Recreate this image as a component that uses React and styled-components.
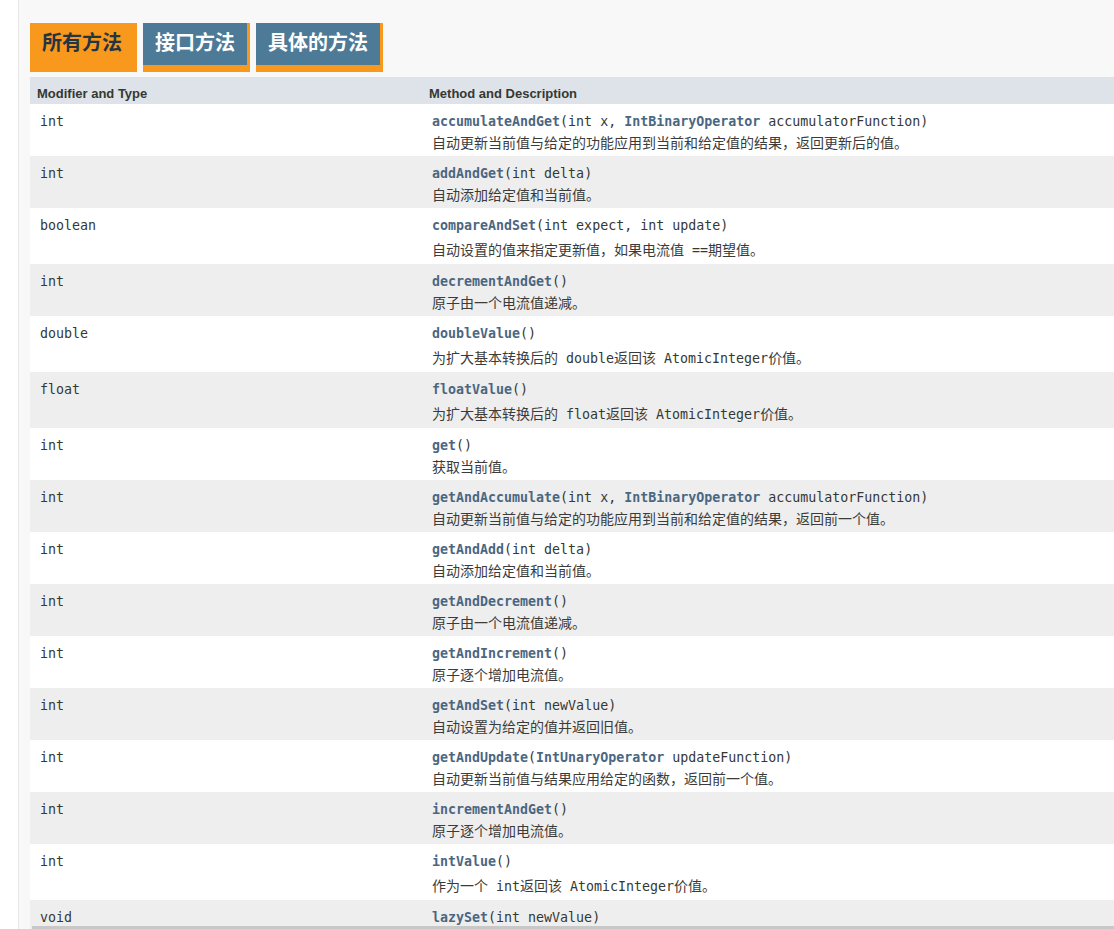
import React from 'react';
import styled, { createGlobalStyle } from 'styled-components';

const GlobalStyle = createGlobalStyle`
  html, body {
    margin: 0;
    padding: 0;
    background: #ffffff;
    overflow: hidden;
  }
`;

const MONO = '"DejaVu Sans Mono", "Liberation Mono", monospace';
const CJK = '"Noto Sans CJK SC", "Noto Sans", sans-serif';

const METHODS = [
  {
    type: 'int',
    name: 'accumulateAndGet',
    params: [['int x, '], ['IntBinaryOperator', true], [' accumulatorFunction']],
    desc: ['自动更新当前值与给定的功能应用到当前和给定值的结果，返回更新后的值。'],
  },
  { type: 'int', name: 'addAndGet', params: [['int delta']], desc: ['自动添加给定值和当前值。'] },
  {
    type: 'boolean',
    name: 'compareAndSet',
    params: [['int expect, int update']],
    desc: ['自动设置的值来指定更新值，如果电流值', { code: ' ==' }, '期望值。'],
  },
  { type: 'int', name: 'decrementAndGet', params: [], desc: ['原子由一个电流值递减。'] },
  {
    type: 'double',
    name: 'doubleValue',
    params: [],
    desc: ['为扩大基本转换后的', { code: ' double' }, '返回该', { code: ' AtomicInteger' }, '价值。'],
  },
  {
    type: 'float',
    name: 'floatValue',
    params: [],
    desc: ['为扩大基本转换后的', { code: ' float' }, '返回该', { code: ' AtomicInteger' }, '价值。'],
  },
  { type: 'int', name: 'get', params: [], desc: ['获取当前值。'] },
  {
    type: 'int',
    name: 'getAndAccumulate',
    params: [['int x, '], ['IntBinaryOperator', true], [' accumulatorFunction']],
    desc: ['自动更新当前值与给定的功能应用到当前和给定值的结果，返回前一个值。'],
  },
  { type: 'int', name: 'getAndAdd', params: [['int delta']], desc: ['自动添加给定值和当前值。'] },
  { type: 'int', name: 'getAndDecrement', params: [], desc: ['原子由一个电流值递减。'] },
  { type: 'int', name: 'getAndIncrement', params: [], desc: ['原子逐个增加电流值。'] },
  { type: 'int', name: 'getAndSet', params: [['int newValue']], desc: ['自动设置为给定的值并返回旧值。'] },
  {
    type: 'int',
    name: 'getAndUpdate',
    params: [['IntUnaryOperator', true], [' updateFunction']],
    desc: ['自动更新当前值与结果应用给定的函数，返回前一个值。'],
  },
  { type: 'int', name: 'incrementAndGet', params: [], desc: ['原子逐个增加电流值。'] },
  {
    type: 'int',
    name: 'intValue',
    params: [],
    desc: ['作为一个', { code: ' int' }, '返回该', { code: ' AtomicInteger' }, '价值。'],
  },
  { type: 'void', name: 'lazySet', params: [['int newValue']], desc: ['最终设定为给定的值。'] },
];

const TABS = [
  { label: '所有方法', active: true },
  { label: '接口方法' },
  { label: '具体的方法' },
];

function App() {
  return (
    <>
      <GlobalStyle />
      <Page>
        <SideStrip />
        <Main>
          <TabBar>
            {TABS.map((t) => (
              <Tab key={t.label} $active={t.active}>
                {t.label}
              </Tab>
            ))}
          </TabBar>
          <Table>
            <HeaderRow>
              <HeaderCell>Modifier and Type</HeaderCell>
              <HeaderCell>Method and Description</HeaderCell>
            </HeaderRow>
            {METHODS.map((m, i) => {
              const hasCode = m.desc.some((d) => typeof d !== 'string');
              return (
                <Row key={m.name} $alt={i % 2 === 1}>
                  <TypeCell>{m.type}</TypeCell>
                  <MethodCell>
                    <Signature>
                      <MethodLink>{m.name}</MethodLink>(
                      {m.params.map(([text, link], j) =>
                        link ? <MethodLink key={j}>{text}</MethodLink> : <span key={j}>{text}</span>
                      )}
                      )
                    </Signature>
                    <Desc $hasCode={hasCode}>
                      {m.desc.map((d, j) =>
                        typeof d === 'string' ? <span key={j}>{d}</span> : <InlineCode key={j}>{d.code}</InlineCode>
                      )}
                    </Desc>
                  </MethodCell>
                </Row>
              );
            })}
          </Table>
        </Main>
      </Page>
      <ScrollTrack />
    </>
  );
}

export default App;

const Page = styled.div`
  display: flex;
  min-height: 100vh;
`;

const SideStrip = styled.div`
  width: 18px;
  flex: 0 0 18px;
  background: #ffffff;
  border-right: 1px solid #e8e8e8;
`;

const Main = styled.div`
  flex: 1;
  background: #f8f8f8;
  padding: 23px 0 0 11px;
  min-width: 0;
`;

const TabBar = styled.div`
  display: flex;
  align-items: flex-start;
  gap: 6px;
  margin-bottom: 5px;
`;

const Tab = styled.div`
  font-family: ${CJK};
  font-weight: 700;
  font-size: 20px;
  line-height: 22px;
  white-space: nowrap;
  padding: 8px ${(p) => (p.$active ? '15px' : '12px')} ${(p) => (p.$active ? '19px' : '12px')} 12px;
  background: ${(p) => (p.$active ? '#f8981d' : '#4d7a97')};
  color: ${(p) => (p.$active ? '#253441' : '#ffffff')};
  border-right: ${(p) => (p.$active ? 'none' : '3px solid #f8981d')};
  border-bottom: ${(p) => (p.$active ? 'none' : '7px solid #f8981d')};
`;

const Table = styled.div`
  display: flex;
  flex-direction: column;
`;

const HeaderRow = styled.div`
  display: grid;
  grid-template-columns: 392px 1fr;
  background: #dee3e9;
  height: 27px;
  box-sizing: border-box;
`;

const HeaderCell = styled.div`
  font-family: "Liberation Sans", Arial, sans-serif;
  font-weight: 700;
  font-size: 13px;
  line-height: 21px;
  padding: 6px 0 0 7px;
  color: #353833;
`;

const Row = styled.div`
  display: grid;
  grid-template-columns: 392px 1fr;
  background: ${(p) => (p.$alt ? '#eeeeee' : '#ffffff')};
  padding: 8px 0 4px;
`;

const TypeCell = styled.div`
  font-family: ${MONO};
  font-size: 13.3px;
  line-height: 20px;
  color: #353833;
  padding-left: 10px;
`;

const MethodCell = styled.div`
  padding-left: 10px;
  display: flex;
  flex-direction: column;
`;

const Signature = styled.div`
  font-family: ${MONO};
  font-size: 13.3px;
  line-height: 20px;
  color: #353833;
  white-space: nowrap;
`;

const MethodLink = styled.span`
  font-weight: 700;
  color: #4a6782;
`;

const Desc = styled.div`
  font-family: ${CJK};
  font-size: 14px;
  line-height: ${(p) => (p.$hasCode ? '22px' : '20px')};
  height: ${(p) => (p.$hasCode ? '22px' : '20px')};
  padding-top: ${(p) => (p.$hasCode ? '2px' : '0')};
  color: #3b3b3b;
  white-space: pre;
`;

const InlineCode = styled.code`
  font-family: ${MONO};
  font-size: 13.3px;
  line-height: 1;
  color: #353833;
`;

const ScrollTrack = styled.div`
  position: fixed;
  left: 32px;
  right: 0;
  bottom: 0;
  height: 3px;
  background: #c8c8c8;
`;
